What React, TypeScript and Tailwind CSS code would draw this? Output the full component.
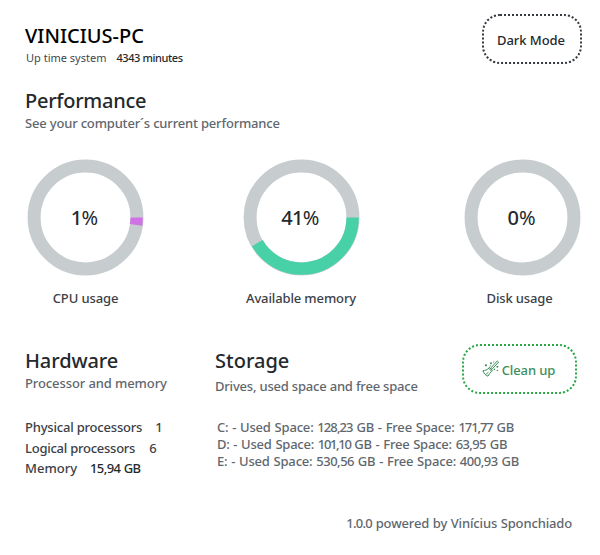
import React from "react";

type GaugeProps = {
  value: string;
  label: string;
  percent: number;
  color: string;
  valueClass: string;
  labelClass: string;
};

const RADIUS = 51.4;
const LENGTH = 2 * Math.PI * RADIUS;

function Gauge({ value, label, percent, color, valueClass, labelClass }: GaugeProps) {
  return (
    <div className="flex w-[117px] flex-col items-center">
      <div className="grid h-[117px] w-[117px] place-items-center">
        <svg className="col-start-1 row-start-1" width="117" height="117" viewBox="0 0 117 117" fill="none">
          <circle cx="58.5" cy="58.5" r={RADIUS} stroke="#c7cccf" strokeWidth="13" />
          {percent > 0 && (
            <circle
              cx="58.5"
              cy="58.5"
              r={RADIUS - 0.3}
              stroke={color}
              strokeWidth="12.4"
              strokeDasharray={`${(LENGTH * percent) / 100} ${LENGTH}`}
            />
          )}
        </svg>
        <span className={`col-start-1 row-start-1 text-[20px] leading-6 text-[#24292d] ${valueClass}`}>
          {value}
          <span className="font-normal">%</span>
        </span>
      </div>
      <span className={`mt-[13px] text-[13px] leading-[18px] text-[#3b4046] ${labelClass}`}>{label}</span>
    </div>
  );
}

function BroomIcon() {
  return (
    <svg width="18" height="18" viewBox="0 0 18 18" fill="none" stroke="#3c8e5b" strokeWidth="1" strokeLinecap="round" strokeLinejoin="round">
      <path d="M15.6 1.2 16.6 2.1 10.4 8.8 9.4 7.9Z" />
      <path d="M7.6 7.6 10.4 10.4 9.6 11.2 6.8 8.4Z" />
      <path d="M6.6 8.5C5 9.9 3 10.5 1 10.7 1.8 13.5 3.5 15.3 6 16.2 6.9 14.5 8 12.7 9.4 11.4" />
      <path d="M4.4 14 6.2 12.4" />
      <g fill="#3c8e5b" stroke="none">
        <circle cx="3.9" cy="5.3" r="1.1" />
        <circle cx="9" cy="3.3" r="1" />
        <circle cx="8.2" cy="5.9" r="0.6" />
        <circle cx="11.6" cy="2" r="0.6" />
        <circle cx="15.4" cy="6.7" r="1" />
        <circle cx="12.4" cy="9.3" r="0.8" />
        <circle cx="15.4" cy="10.5" r="0.8" />
      </g>
    </svg>
  );
}

export default function App() {
  return (
    <main className="flex h-[555px] w-[600px] flex-col overflow-hidden whitespace-nowrap bg-white pl-[25px] font-['Noto_Sans','Open_Sans',sans-serif] font-medium">
      <header className="flex h-[64px] justify-between pr-[18px] pt-[14px]">
        <div className="pt-[8px]">
          <h1 className="text-[20px] leading-7 text-black">VINICIUS-PC</h1>
          <p className="flex gap-[10px] pl-px text-[11px] leading-4">
            <span className="font-normal text-[#3f474e]">Up time system</span>
            <span className="tracking-[-0.4px] text-[#24292d]">4343 minutes</span>
          </p>
        </div>
        <button className="flex h-[50px] w-[100px] items-center justify-center rounded-[18px] border-2 border-dotted border-[#343a40] pr-[2px] pt-[3px] text-[13px] tracking-[-0.05px] text-[#24292d]">
          Dark Mode
        </button>
      </header>

      <section className="pt-[23px]">
        <h2 className="text-[20px] leading-7 tracking-[-0.27px] text-[#24292d]">Performance</h2>
        <p className="-mt-px text-[13px] leading-[18px] tracking-[-0.18px] text-[#5f676e]">See your computer´s current performance</p>
        <div className="mt-[27px] flex pl-[2px]">
          <Gauge value="1" label="CPU usage" percent={2.3} color="#cf72e5" valueClass="pr-[3px] tracking-[-0.8px]" labelClass="tracking-[-0.1px]" />
          <div className="ml-[99px]">
            <Gauge value="41" label="Available memory" percent={41.3} color="#48d1a7" valueClass="pr-[3px] tracking-[-0.7px]" labelClass="pr-px tracking-[-0.13px]" />
          </div>
          <div className="ml-[104px]">
            <Gauge value="0" label="Disk usage" percent={0} color="#48d1a7" valueClass="pr-[2px]" labelClass="pr-[6px] tracking-[-0.15px]" />
          </div>
        </div>
      </section>

      <section className="mt-[36px] flex">
        <div className="w-[190px] pt-[4px]">
          <h2 className="text-[20px] leading-7 tracking-[-0.1px] text-[#24292d]">Hardware</h2>
          <p className="-mt-px text-[13px] leading-[18px] tracking-[-0.1px] text-[#5f676e]">Processor and memory</p>
        </div>
        <div className="w-[247px] pt-[4px]">
          <h2 className="text-[20px] leading-7 text-[#24292d]">Storage</h2>
          <p className="mt-[2px] text-[13px] leading-[18px] tracking-[-0.2px] text-[#5f676e]">Drives, used space and free space</p>
        </div>
        <button className="mt-px flex h-[50px] w-[115px] items-center justify-center gap-[2px] rounded-[18px] border-2 border-dotted border-[#28a745] pr-[2px] text-[13px] tracking-[-0.1px] text-[#3c8e5b]">
          <BroomIcon />
          <span className="pt-[3px]">Clean up</span>
        </button>
      </section>

      <section className="mt-[22px] flex text-[13px] text-[#5f676e]">
        <div className="w-[192px] leading-[20.5px] text-[#3b4046]">
          <p className="flex gap-[13px]"><span className="tracking-[-0.2px]">Physical processors</span><span>1</span></p>
          <p className="flex gap-[14px]"><span className="tracking-[-0.25px]">Logical processors</span><span>6</span></p>
          <p className="flex gap-[13px]"><span>Memory</span><span className="tracking-[-0.6px] text-[#24292d] [word-spacing:0.6px]">15,94 GB</span></p>
        </div>
        <div className="pt-[2px] leading-[17px] tracking-[-0.18px] [word-spacing:0.6px]">
          <p>C: - Used Space: <span className="tracking-[-0.9px]">128,23</span> GB - Free Space: <span className="tracking-[-1.1px]">171,77</span> GB</p>
          <p className="tracking-[-0.22px]">D: - Used Space: <span className="tracking-[-1.35px]">101,10</span> GB - Free Space: <span className="tracking-[-0.6px]">63,95</span> GB</p>
          <p>E: - Used Space: <span className="tracking-[-0.5px]">530,56</span> GB - Free Space: <span className="tracking-[-0.5px]">400,93</span> GB</p>
        </div>
      </section>

      <footer className="mt-[35px] pr-[28px] text-right text-[13px] leading-[18px] tracking-[-0.15px] text-[#5f676e] [word-spacing:0.4px]">
        <span className="tracking-[-0.7px]">1.0.0</span> powered by Vinícius Sponchiado
      </footer>
    </main>
  );
}
